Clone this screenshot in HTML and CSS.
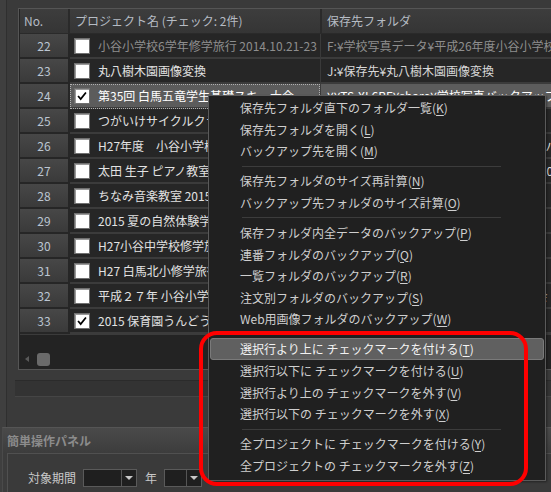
FILE: index.html
```html
<!DOCTYPE html>
<html lang="ja">
<head>
<meta charset="utf-8">
<link rel="stylesheet" href="styles.css">
</head>
<body>
<div class="app">
  <div class="workspace">
    <div class="grid">
      <div class="hdr">
        <div class="hcell hno">No.</div>
        <div class="hcell">プロジェクト名 (チェック: 2件)</div>
        <div class="hcell">保存先フォルダ</div>
      </div>

      <div class="row dim">
        <div class="no">22</div>
        <div class="name"><span class="cb"></span><span class="txt">小谷小学校6学年修学旅行 2014.10.21-23</span></div>
        <div class="folder">F:¥学校写真データ¥平成26年度小谷小学校6学年修学旅行</div>
      </div>
      <div class="row">
        <div class="no">23</div>
        <div class="name"><span class="cb"></span><span class="txt">丸八樹木園画像変換</span></div>
        <div class="folder">J:¥保存先¥丸八樹木園画像変換</div>
      </div>
      <div class="row sel">
        <div class="no">24</div>
        <div class="name"><span class="cb"><svg viewBox="0 0 16 16" width="14" height="14"><path d="M3.5 8 L6.5 11.5 L12.5 4" fill="none" stroke="#000" stroke-width="2"/></svg></span><span class="txt">第35回 白馬五竜学生基礎スキー大会</span></div>
        <div class="folder">¥¥TS-XL6BF¥share¥学校写真バックアップ¥第35回</div>
      </div>
      <div class="row">
        <div class="no">25</div>
        <div class="name"><span class="cb"></span><span class="txt">つがいけサイクルクラシック 2015</span></div>
        <div class="folder">J:¥保存先¥つがいけサイクルクラシック</div>
      </div>
      <div class="row">
        <div class="no">26</div>
        <div class="name"><span class="cb"></span><span class="txt">H27年度　小谷小学校 卒業アルバム</span></div>
        <div class="folder">J:¥保存先¥H27年度 小谷小学校 卒業アルバム1</div>
      </div>
      <div class="row">
        <div class="no">27</div>
        <div class="name"><span class="cb"></span><span class="txt">太田 生子 ピアノ教室 発表会</span></div>
        <div class="folder">J:¥保存先¥太田 生子 ピアノ教室 発表会 2015</div>
      </div>
      <div class="row">
        <div class="no">28</div>
        <div class="name"><span class="cb"></span><span class="txt">ちなみ音楽教室 2015.8.2</span></div>
        <div class="folder">J:¥保存先¥ちなみ音楽教室 2015.8.2</div>
      </div>
      <div class="row">
        <div class="no">29</div>
        <div class="name"><span class="cb"></span><span class="txt">2015 夏の自然体験学習</span></div>
        <div class="folder">J:¥保存先¥2015 夏の自然体験学習</div>
      </div>
      <div class="row">
        <div class="no">30</div>
        <div class="name"><span class="cb"></span><span class="txt">H27小谷中学校修学旅行</span></div>
        <div class="folder">J:¥保存先¥H27小谷中学校修学旅行</div>
      </div>
      <div class="row">
        <div class="no">31</div>
        <div class="name"><span class="cb"></span><span class="txt">H27 白馬北小修学旅行</span></div>
        <div class="folder">J:¥保存先¥H27 白馬北小修学旅行</div>
      </div>
      <div class="row">
        <div class="no">32</div>
        <div class="name"><span class="cb"></span><span class="txt">平成２７年 小谷小学校 運動会</span></div>
        <div class="folder">J:¥保存先¥平成２７年 小谷小学校 運動会</div>
      </div>
      <div class="row">
        <div class="no">33</div>
        <div class="name"><span class="cb"><svg viewBox="0 0 16 16" width="14" height="14"><path d="M3.5 8 L6.5 11.5 L12.5 4" fill="none" stroke="#000" stroke-width="2"/></svg></span><span class="txt">2015 保育園うんどう会</span></div>
        <div class="folder">J:¥保存先¥2015 保育園うんどう会</div>
      </div>

      <div class="empty">
        <div class="hscroll">
          <span class="arrow"></span>
          <span class="thumb"></span>
        </div>
      </div>
    </div>
    <div class="statusbar"></div>
  </div>

  <div class="panel">
    <div class="ptitle">簡単操作パネル</div>
    <div class="pbox">
      <span class="plabel">対象期間</span>
      <span class="combo wide"><span class="cval"></span><span class="cbtn"></span></span>
      <span class="plabel unit">年</span>
      <span class="combo narrow"><span class="cval"></span><span class="cbtn"></span></span>
    </div>
  </div>

  <div class="menu">
    <div class="mi">保存先フォルダ直下のフォルダ一覧(<u>K</u>)</div>
    <div class="mi">保存先フォルダを開く(<u>L</u>)</div>
    <div class="mi">バックアップ先を開く(<u>M</u>)</div>
    <div class="msep"></div>
    <div class="mi">保存先フォルダのサイズ再計算(<u>N</u>)</div>
    <div class="mi">バックアップ先フォルダのサイズ計算(<u>O</u>)</div>
    <div class="msep"></div>
    <div class="mi">保存フォルダ内全データのバックアップ(<u>P</u>)</div>
    <div class="mi">連番フォルダのバックアップ(<u>Q</u>)</div>
    <div class="mi">一覧フォルダのバックアップ(<u>R</u>)</div>
    <div class="mi">注文別フォルダのバックアップ(<u>S</u>)</div>
    <div class="mi">Web用画像フォルダのバックアップ(<u>W</u>)</div>
    <div class="msep"></div>
    <div class="mi hot">選択行より上に チェックマークを付ける(<u>T</u>)</div>
    <div class="mi">選択行以下に チェックマークを付ける(<u>U</u>)</div>
    <div class="mi">選択行より上の チェックマークを外す(<u>V</u>)</div>
    <div class="mi">選択行以下の チェックマークを外す(<u>X</u>)</div>
    <div class="msep"></div>
    <div class="mi">全プロジェクトに チェックマークを付ける(<u>Y</u>)</div>
    <div class="mi">全プロジェクトの チェックマークを外す(<u>Z</u>)</div>
  </div>

  <div class="annot"></div>
</div>
</body>
</html>
```

FILE: styles.css
```css
* { box-sizing: border-box; }
html, body { margin: 0; padding: 0; background: #3b3b3b; }
body {
  font-family: "Noto Sans CJK JP", "Noto Sans", sans-serif;
  font-size: 12px;
  color: #d8d8d8;
}
.app {
  width: 551px;
  height: 492px;
  position: relative;
  overflow: hidden;
  background: #3f3f3f;
}
.workspace {
  margin-left: 6px;
  border-left: 1px solid #2f2f2f;
  background: #3a3a3a;
  height: 427px;
  padding: 8px 0 0 11px;
}
.grid {
  width: 600px;
  border: 1px solid #555;
  background: #242424;
  padding-left: 1px;
}
.hdr {
  display: grid;
  grid-template-columns: 48px 250px 1fr;
  column-gap: 2px;
  height: 25px;
  background: #2a2a2a;
}
.hcell {
  background: linear-gradient(#3d3d3d, #353535);
  color: #b6bcc4;
  line-height: 24px;
  padding-left: 5px;
  white-space: nowrap;
  overflow: hidden;
  border-bottom: 1px solid #2a2a2a;
}
.hno { padding-left: 4px; }
.row {
  display: grid;
  grid-template-columns: 48px 250px 1fr;
  column-gap: 2px;
  height: 25px;
  background: #262626;
  align-items: start;
}
.no {
  height: 23px;
  background: linear-gradient(#474747, #3a3a3a);
  color: #bcc6d2;
  text-align: center;
  line-height: 23px;
}
.name, .folder {
  height: 25px;
  border-bottom: 2px solid #3b3b3b;
  display: flex;
  align-items: center;
  white-space: nowrap;
  overflow: hidden;
}
.folder {
  padding-left: 5px;
  border-left: 1px solid #3a3a3a;
  margin-left: -2px;
  padding-left: 6px;
}
.cb {
  flex: none;
  width: 16px;
  height: 16px;
  margin-left: 4px;
  margin-right: 8px;
  background: #fff;
  border: 1px solid #707070;
  box-shadow: inset 1px 1px 0 #9a9a9a;
  display: flex;
  align-items: center;
  justify-content: center;
}
.txt { color: #e2e2e2; }
.dim .txt, .dim .folder { color: #8e8e8e; }
.sel .name, .sel .folder {
  background: #5c5c5c;
}
.sel .name {
  outline: 1px dotted #b0b0b0;
  outline-offset: -1px;
}
.sel .txt, .sel .folder { color: #fff; }
.empty {
  height: 35px;
  border-top: 1px solid #3b3b3b;
  display: flex;
  flex-direction: column;
  justify-content: flex-end;
  background: #232323;
}
.hscroll {
  height: 16px;
  display: flex;
  align-items: center;
  padding-left: 5px;
  margin-bottom: 2px;
}
.arrow {
  width: 0;
  height: 0;
  border-top: 3px solid transparent;
  border-bottom: 3px solid transparent;
  border-right: 4px solid #5a5a5a;
  margin-right: 8px;
}
.thumb {
  width: 13px;
  height: 13px;
  border-radius: 3px;
  background: #6a6a6a;
}
.statusbar {
  margin-top: 10px;
  margin-left: -3px;
  height: 17px;
  width: 540px;
  background: #333;
  border-top: 1px solid #2b2b2b;
  border-bottom: 1px solid #454545;
}
.panel {
  margin-left: 2px;
  height: 65px;
  border-top: 1px solid #555;
  border-left: 1px solid #4a4a4a;
  background: linear-gradient(#4a4a4a, #3c3c3c 26px);
}
.ptitle {
  height: 25px;
  line-height: 25px;
  padding-left: 4px;
  font-weight: bold;
  color: #8c8c8c;
}
.pbox {
  margin-left: 4px;
  border: 1px solid #505050;
  border-right: none;
  background: #3a3a3a;
  height: 60px;
  padding: 15px 0 0 20px;
  display: flex;
  align-items: center;
  align-self: flex-start;
}
.pbox { align-items: flex-start; }
.plabel { color: #c8c8c8; line-height: 18px; margin-right: 7px; }
.unit { margin-left: 8px; }
.combo {
  display: flex;
  height: 18px;
  border: 1px solid #5a5a5a;
  background: #1f1f1f;
}
.wide { width: 54px; }
.narrow { width: 38px; }
.cval { flex: 1; }
.cbtn {
  width: 15px;
  border-left: 1px solid #555;
  position: relative;
}
.cbtn::after {
  content: "";
  position: absolute;
  left: 3px;
  top: 6px;
  border-left: 4px solid transparent;
  border-right: 4px solid transparent;
  border-top: 4px solid #c8c8c8;
}
.menu {
  position: absolute;
  left: 208px;
  top: 95px;
  width: 338px;
  background: #202020;
  border: 1px solid #5a5a5a;
  padding: 1px 1px 3px 1px;
  box-shadow: 1px 1px 2px rgba(0,0,0,0.4);
}
.mi {
  height: 21.6px;
  line-height: 21.6px;
  padding-left: 30px;
  color: #cfcfcf;
  white-space: nowrap;
}
.mi u { text-underline-offset: 2px; }
.hot {
  background: #606060;
  border: 1px solid #7a7a7a;
  border-radius: 3px;
  color: #f2f2f2;
  line-height: 19.6px;
  padding-left: 29px;
}
.msep {
  height: 8.5px;
  position: relative;
}
.msep::after {
  content: "";
  position: absolute;
  left: 32px;
  right: 43px;
  top: 4px;
  height: 1px;
  background: #3c3c3c;
}
.annot {
  position: absolute;
  left: 199px;
  top: 331px;
  width: 329px;
  height: 155px;
  border: 4px solid #ff0000;
  border-radius: 18px;
  pointer-events: none;
}
```
